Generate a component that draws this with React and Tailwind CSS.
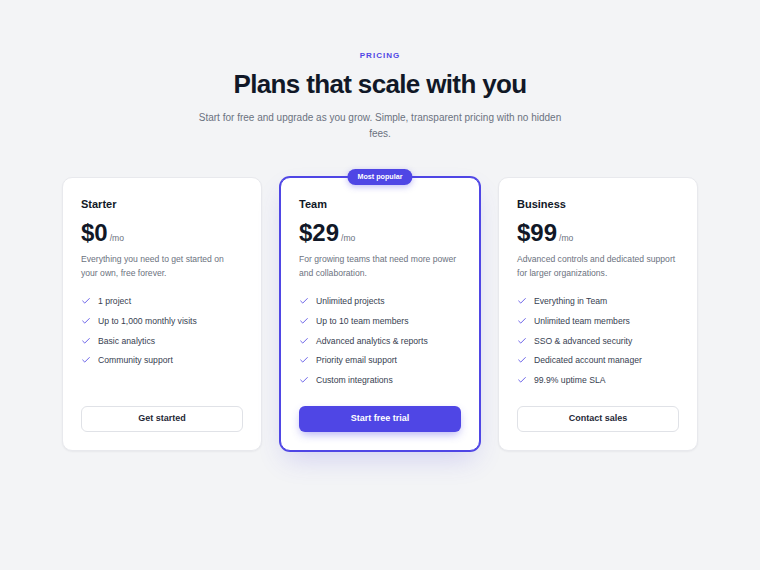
import { Check } from 'lucide-react';

// Plan data for the three pricing columns
const plans = [
  {
    name: 'Starter',
    price: '$0',
    blurb: 'Everything you need to get started on your own, free forever.',
    blurbWidth: 'max-w-[152px]',
    features: ['1 project', 'Up to 1,000 monthly visits', 'Basic analytics', 'Community support'],
    cta: 'Get started',
  },
  {
    name: 'Team',
    price: '$29',
    blurb: 'For growing teams that need more power and collaboration.',
    features: [
      'Unlimited projects',
      'Up to 10 team members',
      'Advanced analytics & reports',
      'Priority email support',
      'Custom integrations',
    ],
    cta: 'Start free trial',
    featured: true,
  },
  {
    name: 'Business',
    price: '$99',
    blurb: 'Advanced controls and dedicated support for larger organizations.',
    features: [
      'Everything in Team',
      'Unlimited team members',
      'SSO & advanced security',
      'Dedicated account manager',
      '99.9% uptime SLA',
    ],
    cta: 'Contact sales',
  },
];

const PlanCard = ({ plan }) => {
  const { name, price, blurb, blurbWidth, features, cta, featured } = plan;

  return (
    <div
      className={`relative flex flex-col rounded-[10px] bg-white px-[18px] pt-[18px] pb-[18px] border ${
        featured
          ? 'border-[#4f46e5] ring-1 ring-[#4f46e5] shadow-[0_12px_28px_-6px_rgba(79,70,229,0.22)]'
          : 'border-[#e8e9ed] shadow-[0_1px_2px_rgba(15,23,42,0.05)]'
      }`}
    >
      {featured && (
        <span className="absolute -top-[9px] left-1/2 -translate-x-1/2 rounded-full bg-[#4f46e5] px-[10px] h-[16px] flex items-center text-[7.2px] font-bold text-white whitespace-nowrap shadow-[0_2px_6px_rgba(79,70,229,0.35)]">
          Most popular
        </span>
      )}

      <h3 className="text-[11px] leading-[16px] font-bold text-[#111827]">{name}</h3>

      <div className="mt-[7px] flex items-baseline gap-[2px]">
        <span className="text-[24px] leading-[28px] font-bold text-[#111827]">{price}</span>
        <span className="text-[8.6px] text-[#6b7280]">/mo</span>
      </div>

      <p className={`mt-[6px] text-[8.6px] leading-[13.5px] text-[#6b7280] ${blurbWidth || ''}`}>{blurb}</p>

      <ul className="mt-[14px] mb-[19px] flex flex-col gap-[5.75px]">
        {features.map((f) => (
          <li key={f} className="flex items-center gap-[7px] text-[8.65px] leading-[14px] text-[#374151]">
            <Check className="w-[10px] h-[10px] text-[#4f46e5] shrink-0" strokeWidth={2} />
            {f}
          </li>
        ))}
      </ul>

      <button
        className={`mt-auto h-[26px] w-full rounded-[6px] text-[9px] font-bold ${
          featured
            ? 'bg-[#4f46e5] text-white shadow-[0_4px_10px_-2px_rgba(79,70,229,0.45)]'
            : 'bg-white text-[#1f2937] border border-[#e0e2e7]'
        }`}
      >
        {cta}
      </button>
    </div>
  );
};

export default function App() {
  return (
    <div
      className="min-h-screen bg-[#f3f4f6] pt-[49px] pb-10"
      style={{ fontFamily: '"Liberation Sans", Arial, sans-serif' }}
    >
      <div className="flex flex-col items-center text-center">
        <p className="text-[8px] leading-[14px] font-bold tracking-[0.13em] text-[#4f46e5]">PRICING</p>
        <h1 className="mt-[5px] text-[26px] leading-[32px] font-bold tracking-tight text-[#111827]">
          Plans that scale with you
        </h1>
        <p className="mt-[10px] max-w-[378px] text-[10px] leading-[16px] text-[#6b7280]">
          Start for free and upgrade as you grow. Simple, transparent pricing with no hidden fees.
        </p>
      </div>

      <div className="mx-auto mt-[35px] grid w-[636px] grid-cols-3 gap-[18px]">
        {plans.map((p) => (
          <PlanCard key={p.name} plan={p} />
        ))}
      </div>
    </div>
  );
}
